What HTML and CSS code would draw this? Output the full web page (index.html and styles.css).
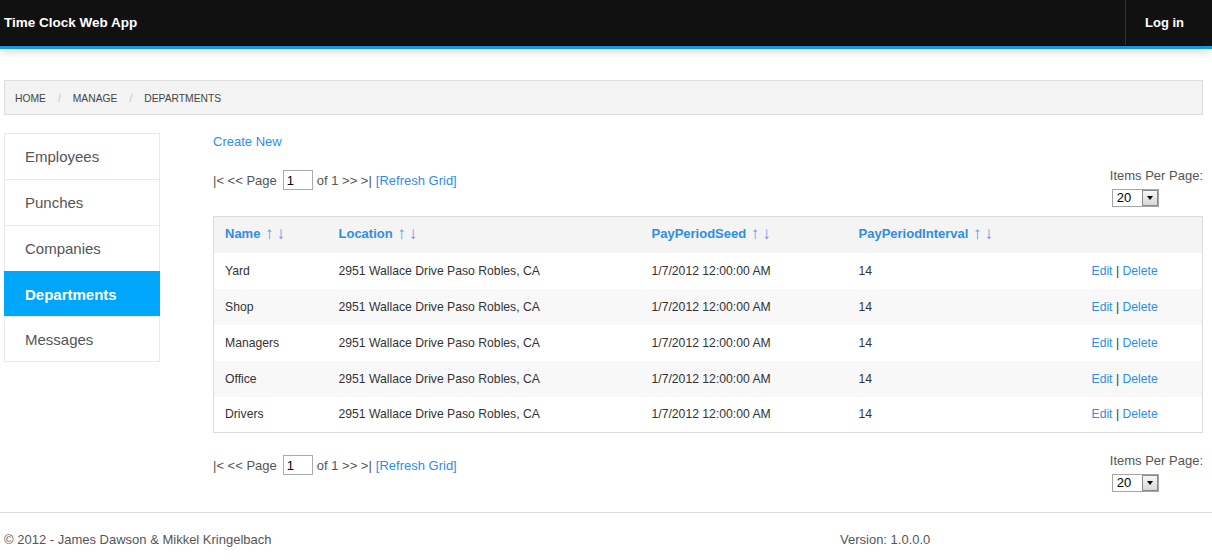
FILE: index.html
```html
<!DOCTYPE html>
<html>
<head>
<meta charset="utf-8">
<title>Departments</title>
<link rel="stylesheet" href="styles.css">
</head>
<body>
<header class="navbar">
  <div class="navbar-inner">
    <a class="brand" href="#">Time Clock Web App</a>
    <a class="login" href="#">Log in</a>
  </div>
</header>

<div class="page">
  <nav class="breadcrumb">
    <span>Home</span><span class="sep">/</span><span>Manage</span><span class="sep">/</span><span>Departments</span>
  </nav>

  <div class="main">
    <ul class="sidenav">
      <li><a href="#">Employees</a></li>
      <li><a href="#">Punches</a></li>
      <li><a href="#">Companies</a></li>
      <li class="active"><a href="#">Departments</a></li>
      <li><a href="#">Messages</a></li>
    </ul>

    <section class="content">
      <a class="link create" href="#">Create New</a>

      <div class="pager-row">
        <div class="pager">
          <span>|&lt; &lt;&lt; Page</span>
          <input class="page-input" type="text" value="1">
          <span>of 1 &gt;&gt; &gt;|</span>
          <a class="link" href="#">[Refresh Grid]</a>
        </div>
        <div class="per-page">
          <div class="per-label">Items Per Page:</div>
          <div class="fake-select"><span class="val">20</span><span class="btn"><span class="tri"></span></span></div>
        </div>
      </div>

      <table class="grid">
        <colgroup>
          <col class="c1"><col class="c2"><col class="c3"><col class="c4"><col class="c5">
        </colgroup>
        <thead>
          <tr>
            <th>Name <span class="arr"><span>↑</span><span>↓</span></span></th>
            <th>Location <span class="arr"><span>↑</span><span>↓</span></span></th>
            <th>PayPeriodSeed <span class="arr"><span>↑</span><span>↓</span></span></th>
            <th>PayPeriodInterval <span class="arr"><span>↑</span><span>↓</span></span></th>
            <th></th>
          </tr>
        </thead>
        <tbody>
          <tr><td>Yard</td><td>2951 Wallace Drive Paso Robles, CA</td><td>1/7/2012 12:00:00 AM</td><td>14</td><td><a class="link" href="#">Edit</a> | <a class="link" href="#">Delete</a></td></tr>
          <tr><td>Shop</td><td>2951 Wallace Drive Paso Robles, CA</td><td>1/7/2012 12:00:00 AM</td><td>14</td><td><a class="link" href="#">Edit</a> | <a class="link" href="#">Delete</a></td></tr>
          <tr><td>Managers</td><td>2951 Wallace Drive Paso Robles, CA</td><td>1/7/2012 12:00:00 AM</td><td>14</td><td><a class="link" href="#">Edit</a> | <a class="link" href="#">Delete</a></td></tr>
          <tr><td>Office</td><td>2951 Wallace Drive Paso Robles, CA</td><td>1/7/2012 12:00:00 AM</td><td>14</td><td><a class="link" href="#">Edit</a> | <a class="link" href="#">Delete</a></td></tr>
          <tr><td>Drivers</td><td>2951 Wallace Drive Paso Robles, CA</td><td>1/7/2012 12:00:00 AM</td><td>14</td><td><a class="link" href="#">Edit</a> | <a class="link" href="#">Delete</a></td></tr>
        </tbody>
      </table>

      <div class="pager-row bottom">
        <div class="pager">
          <span>|&lt; &lt;&lt; Page</span>
          <input class="page-input" type="text" value="1">
          <span>of 1 &gt;&gt; &gt;|</span>
          <a class="link" href="#">[Refresh Grid]</a>
        </div>
        <div class="per-page">
          <div class="per-label">Items Per Page:</div>
          <div class="fake-select"><span class="val">20</span><span class="btn"><span class="tri"></span></span></div>
        </div>
      </div>
    </section>
  </div>
</div>

<footer class="footer">
  <div class="footer-inner">
    <span>© 2012 - James Dawson &amp; Mikkel Kringelbach</span>
    <span>Version: 1.0.0.0</span>
  </div>
</footer>
</body>
</html>
```

FILE: styles.css
```css
* { box-sizing: border-box; }

html, body {
  margin: 0;
  padding: 0;
  background: #fff;
}

body {
  font-family: "Liberation Sans", Arial, sans-serif;
  font-size: 13px;
  color: #333;
}

a { text-decoration: none; }

.link { color: #2f8ee2; }

/* navbar */
.navbar {
  background: #111;
  border-bottom: 3px solid #1398e4;
  box-shadow: 0 3px 8px rgba(0, 0, 0, 0.14);
}

.navbar-inner {
  width: 1204px;
  height: 46px;
  padding-left: 4px;
  display: flex;
  align-items: stretch;
  justify-content: space-between;
  border-bottom: 1px solid #000;
}

.brand {
  color: #fff;
  font-weight: bold;
  font-size: 13.5px;
  display: flex;
  align-items: center;
  padding-bottom: 1px;
}

.login {
  color: #fff;
  font-weight: bold;
  font-size: 13px;
  display: flex;
  align-items: center;
  padding: 0 20px 1px 19px;
  border-left: 1px solid #333;
}

/* page */
.page {
  width: 1199px;
  margin-left: 4px;
  padding-top: 31px;
}

.breadcrumb {
  height: 35px;
  background: #f3f3f3;
  border: 1px solid #ddd;
  display: flex;
  align-items: center;
  padding: 1px 0 0 10px;
  font-size: 10.3px;
  text-transform: uppercase;
  color: #444;
}

.breadcrumb .sep {
  color: #c4c4c4;
  margin: 0 12px;
}

.main {
  display: flex;
  align-items: flex-start;
  gap: 53px;
  margin-top: 18px;
}

/* sidebar */
.sidenav {
  list-style: none;
  margin: 0;
  padding: 0;
  width: 156px;
  flex: none;
  border: 1px solid #e9e9e9;
}

.sidenav li {
  height: 46px;
  border-top: 1px solid #eaeaea;
}

.sidenav li:first-child { border-top: 0; height: 45px; }
.sidenav li:last-child { height: 45px; }

.sidenav a {
  display: flex;
  align-items: center;
  height: 100%;
  padding-left: 20px;
  font-size: 15px;
  color: #555;
}

.sidenav li.active {
  height: 45px;
  background: #00a6fa;
  border-top-color: #00a6fa;
  margin: 0 -1px;
  padding: 0 1px;
}

.sidenav li.active a {
  color: #fff;
  font-weight: bold;
}

/* content */
.content {
  flex: 1;
  min-width: 0;
  padding-top: 1px;
}

.create {
  display: block;
  line-height: 15px;
  margin-bottom: 20px;
}

.pager-row {
  display: flex;
  justify-content: space-between;
  align-items: flex-start;
}

.pager-row.bottom { margin-top: 21px; }

.pager {
  display: flex;
  align-items: center;
  gap: 4px;
  padding-top: 1px;
  color: #555;
  white-space: nowrap;
}

.pager span:first-child { margin-right: 2px; }

.page-input {
  width: 30px;
  height: 20px;
  border: 1px solid #aaa;
  padding: 0 3px;
  margin: 0;
  font-family: "Liberation Sans", Arial, sans-serif;
  font-size: 13px;
  color: #000;
}

.per-page {
  flex: none;
  white-space: nowrap;
  color: #555;
}

.per-label {
  line-height: 14px;
}

.fake-select {
  margin: 6px 0 0 2px;
  width: 47px;
  height: 18px;
  border: 1px solid #a5a5a5;
  display: flex;
  justify-content: space-between;
  align-items: stretch;
  color: #000;
}

.fake-select .val {
  padding-left: 4px;
  line-height: 16px;
  font-size: 13px;
}

.fake-select .btn {
  width: 16px;
  border: 1px solid #8a8a8a;
  background: linear-gradient(#f6f6f6, #d8d8d8);
  display: flex;
  align-items: center;
  justify-content: center;
}

.fake-select .tri {
  width: 0;
  height: 0;
  border-left: 3.5px solid transparent;
  border-right: 3.5px solid transparent;
  border-top: 4px solid #000;
}

/* table */
.grid {
  width: 100%;
  margin-top: 9px;
  border-collapse: collapse;
  border: 1px solid #ddd;
  table-layout: fixed;
  font-size: 12px;
}

.grid col.c1 { width: 114px; }
.grid col.c2 { width: 313px; }
.grid col.c3 { width: 207px; }
.grid col.c4 { width: 233px; }

.grid th {
  background: #f4f4f4;
  height: 36px;
  text-align: left;
  padding: 0 0 2px 11px;
  font-size: 13px;
  font-weight: bold;
  color: #2f8ee2;
  white-space: nowrap;
}

.grid th .arr {
  display: inline-flex;
  gap: 3px;
  margin-left: 1px;
  vertical-align: -1px;
  font-weight: normal;
  font-size: 17px;
  line-height: 14px;
  color: #4aa0ea;
}

.grid td {
  height: 36px;
  padding: 0 0 0 11px;
  color: #333;
  white-space: nowrap;
  font-size: 12.2px;
}

.grid tbody tr:nth-child(even) td { background: #f8f8f8; }

/* footer */
.footer {
  margin-top: 20px;
  border-top: 1px solid #ddd;
}

.footer-inner {
  display: grid;
  grid-template-columns: 836px 1fr;
  padding: 19px 0 0 4px;
  color: #555;
  line-height: 15px;
}
```
